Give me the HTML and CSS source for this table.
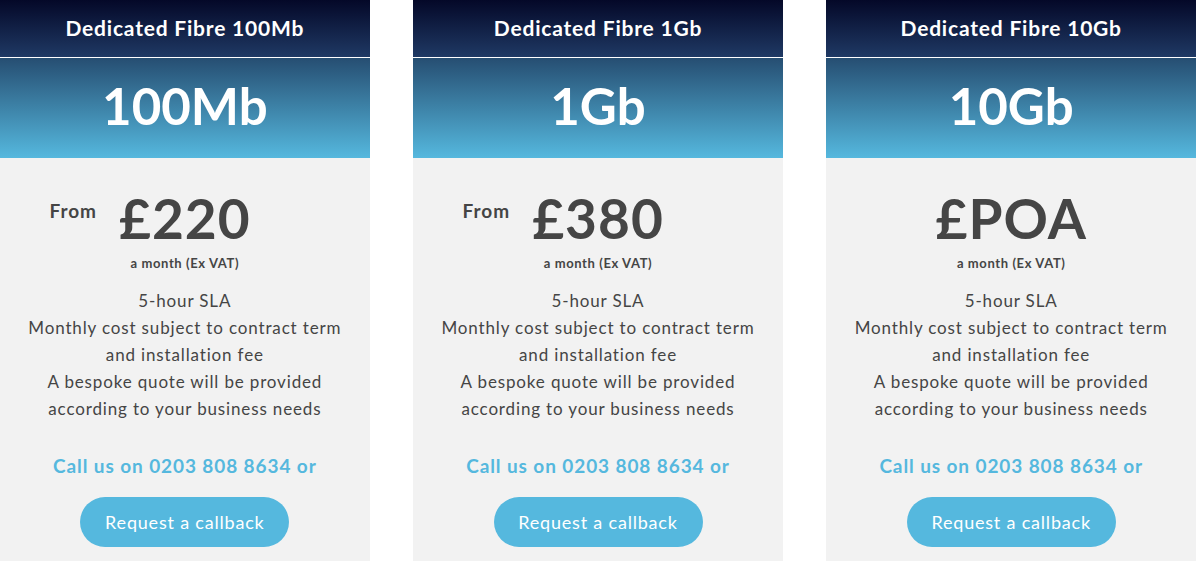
FILE: index.html
```html
<!DOCTYPE html>
<html lang="en-gb">
<head>
    <meta charset="UTF-8">
    <meta name="viewport" content="width=device-width, initial-scale=1.0">
    <title>Dedicated Fibre</title>

    <link rel="stylesheet" href="styles.css">

</head>
<body>
    <div class="plans">
        <div class="plan">
            <div class="plan_title">Dedicated Fibre 100Mb</div>
            <div class="plan_speed">100Mb</div>
            <div class="plan_body">
                <div class="price">
                    <div class="price_row">
                        <span class="from">From</span>
                        <span class="amount">£220</span>
                    </div>
                    <p class="per">a month (Ex VAT)</p>
                </div>
                <ul class="features">
                    <li>5-hour SLA</li>
                    <li>Monthly cost subject to contract term and installation fee</li>
                    <li>A bespoke quote will be provided according to your business needs</li>
                </ul>
                <p class="call">Call us on 0203 808 8634 or</p>
                <a class="callback" href="#">Request a callback</a>
            </div>
        </div>
        <div class="plan">
            <div class="plan_title">Dedicated Fibre 1Gb</div>
            <div class="plan_speed">1Gb</div>
            <div class="plan_body">
                <div class="price">
                    <div class="price_row">
                        <span class="from">From</span>
                        <span class="amount">£380</span>
                    </div>
                    <p class="per">a month (Ex VAT)</p>
                </div>
                <ul class="features">
                    <li>5-hour SLA</li>
                    <li>Monthly cost subject to contract term and installation fee</li>
                    <li>A bespoke quote will be provided according to your business needs</li>
                </ul>
                <p class="call">Call us on 0203 808 8634 or</p>
                <a class="callback" href="#">Request a callback</a>
            </div>
        </div>
        <div class="plan">
            <div class="plan_title">Dedicated Fibre 10Gb</div>
            <div class="plan_speed">10Gb</div>
            <div class="plan_body">
                <div class="price">
                    <div class="price_row">
                        <span class="amount">£POA</span>
                    </div>
                    <p class="per">a month (Ex VAT)</p>
                </div>
                <ul class="features">
                    <li>5-hour SLA</li>
                    <li>Monthly cost subject to contract term and installation fee</li>
                    <li>A bespoke quote will be provided according to your business needs</li>
                </ul>
                <p class="call">Call us on 0203 808 8634 or</p>
                <a class="callback" href="#">Request a callback</a>
            </div>
        </div>
    </div>
</body>
</html>
```

FILE: styles.css
```css
* {
    margin: 0;
    padding: 0;
    box-sizing: border-box;
    font-family: Lato, "Open Sans", Arial, sans-serif;
}

body, html {
    background: #fff;
    overflow: hidden;
}

.plans {
    display: flex;
    gap: 43.5px;
}

.plan {
    flex: 1;
    height: 561px;
    background: #f2f2f2;
    text-align: center;
}

.plan_title {
    height: 58px;
    border-bottom: 1px solid #fff;
    background: linear-gradient(to bottom, #040828, #1f3964);
    color: #fff;
    font-size: 21px;
    font-weight: 700;
    letter-spacing: 0.8px;
    line-height: 56px;
}

.plan_speed {
    height: 100px;
    background: linear-gradient(to bottom, #264e72, #55b8de);
    color: #fff;
    font-size: 51px;
    font-weight: 700;
    line-height: 96px;
}

.plan_body {
    padding-top: 33px;
    color: #454545;
}

.price_row {
    display: inline-block;
    position: relative;
}

.amount {
    font-size: 55px;
    font-weight: 700;
    line-height: 1;
    letter-spacing: 1px;
}

.from {
    position: absolute;
    right: 100%;
    top: 8px;
    margin-right: 22px;
    font-size: 19px;
    font-weight: 700;
    letter-spacing: 1px;
}

.per {
    margin-top: 9px;
    font-size: 13px;
    font-weight: 700;
    letter-spacing: 0.6px;
}

.features {
    list-style: none;
    margin-top: 16px;
    padding: 0 24px;
    font-size: 17px;
    letter-spacing: 0.85px;
    line-height: 27px;
}

.call {
    margin-top: 32px;
    color: #55b8de;
    font-size: 19px;
    font-weight: 700;
    letter-spacing: 0.9px;
}

.callback {
    display: inline-block;
    margin-top: 20px;
    width: 209px;
    height: 50px;
    border-radius: 25px;
    background: #55b8de;
    color: #fff;
    font-size: 18px;
    letter-spacing: 0.8px;
    line-height: 50px;
    text-decoration: none;
}
```
